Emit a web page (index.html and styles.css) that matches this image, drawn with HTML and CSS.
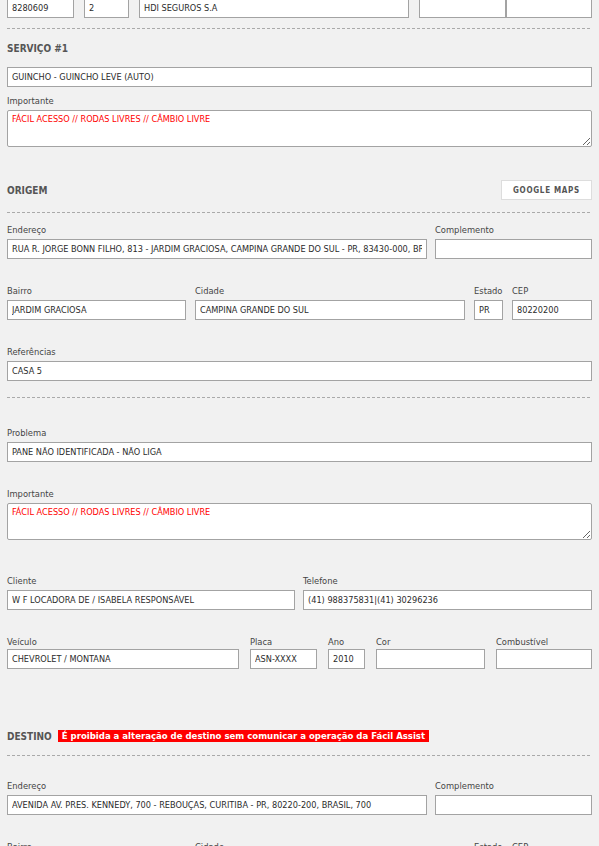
FILE: index.html
```html
<!DOCTYPE html>
<html lang="pt-BR">
<head>
  <meta charset="UTF-8" />
  <meta name="viewport" content="width=device-width, initial-scale=1.0"/>
  <title>Atendimento</title>
  <link rel="stylesheet" href="styles.css">
</head>
<body>
  <form class="sheet">

    <div class="row row-top">
      <input type="text" value="8280609">
      <input type="text" value="2">
      <input type="text" value="HDI SEGUROS S.A">
      <div class="pair">
        <input type="text" value="">
        <input type="text" value="">
      </div>
    </div>

    <div class="rule rule-top"></div>

    <!-- servico -->
    <h4 class="title title-servico">SERVIÇO #1</h4>
    <input type="text" class="full" value="GUINCHO - GUINCHO LEVE (AUTO)">
    <div class="field field-imp1">
      <label>Importante</label>
      <textarea rows="2">FÁCIL ACESSO // RODAS LIVRES // CÂMBIO LIVRE</textarea>
    </div>

    <!-- origem -->
    <div class="head head-origem">
      <h4 class="title">ORIGEM</h4>
      <button type="button" class="btn">GOOGLE MAPS</button>
    </div>
    <div class="rule rule-origem"></div>

    <div class="row cols-end row-end1">
      <div class="field"><label>Endereço</label><input type="text" value="RUA R. JORGE BONN FILHO, 813 - JARDIM GRACIOSA, CAMPINA GRANDE DO SUL - PR, 83430-000, BRASIL, 813"></div>
      <div class="field"><label>Complemento</label><input type="text" value=""></div>
    </div>

    <div class="row cols-bairro gap">
      <div class="field"><label>Bairro</label><input type="text" value="JARDIM GRACIOSA"></div>
      <div class="field"><label>Cidade</label><input type="text" value="CAMPINA GRANDE DO SUL"></div>
      <div class="field"><label>Estado</label><input type="text" value="PR"></div>
      <div class="field"><label>CEP</label><input type="text" value="80220200"></div>
    </div>

    <div class="field gap">
      <label>Referências</label>
      <input type="text" value="CASA 5">
    </div>

    <div class="rule rule-ref"></div>

    <div class="field field-prob">
      <label>Problema</label>
      <input type="text" value="PANE NÃO IDENTIFICADA - NÃO LIGA">
    </div>

    <div class="field gap">
      <label>Importante</label>
      <textarea rows="2">FÁCIL ACESSO // RODAS LIVRES // CÂMBIO LIVRE</textarea>
    </div>

    <div class="row cols-cliente row-cliente">
      <div class="field"><label>Cliente</label><input type="text" value="W F LOCADORA DE / ISABELA RESPONSÁVEL"></div>
      <div class="field"><label>Telefone</label><input type="text" value="(41) 988375831|(41) 30296236"></div>
    </div>

    <div class="row cols-veiculo row-veiculo">
      <div class="field"><label>Veículo</label><input type="text" value="CHEVROLET / MONTANA"></div>
      <div class="field"><label>Placa</label><input type="text" value="ASN-XXXX"></div>
      <div class="field"><label>Ano</label><input type="text" value="2010"></div>
      <div class="field"><label>Cor</label><input type="text" value=""></div>
      <div class="field"><label>Combustível</label><input type="text" value=""></div>
    </div>

    <!-- destino -->
    <div class="head head-destino">
      <h4 class="title">DESTINO</h4>
      <span class="alert">É proibida a alteração de destino sem comunicar a operação da Fácil Assist</span>
    </div>
    <div class="rule rule-destino"></div>

    <div class="row cols-end row-end2">
      <div class="field"><label>Endereço</label><input type="text" value="AVENIDA AV. PRES. KENNEDY, 700 - REBOUÇAS, CURITIBA - PR, 80220-200, BRASIL, 700"></div>
      <div class="field"><label>Complemento</label><input type="text" value=""></div>
    </div>

    <div class="row cols-bairro gap">
      <div class="field"><label>Bairro</label><input type="text" value="REBOUÇAS"></div>
      <div class="field"><label>Cidade</label><input type="text" value="CURITIBA"></div>
      <div class="field"><label>Estado</label><input type="text" value="PR"></div>
      <div class="field"><label>CEP</label><input type="text" value="80220200"></div>
    </div>

  </form>
</body>
</html>
```

FILE: styles.css
```css
* { box-sizing: border-box; }
body { margin: 0; background: #f1f1f1; font-family: "DejaVu Sans Condensed", "DejaVu Sans", sans-serif; font-size: 9.3px; color: #444; }
.sheet { padding: 0 7px 40px; }

input, textarea, button { font-family: inherit; font-size: 9.1px; }
input { display: block; width: 100%; height: 20px; padding: 0 4px; border: 1px solid #a3a3a3; background: #fff; color: #2b2b2b; outline: none; }
textarea { display: block; width: 100%; height: 37px; padding: 2px 4px; border: 1px solid #a3a3a3; border-radius: 2px; background: #fff; color: #f00; line-height: 12px; outline: none; }

.row { display: grid; }
.row-top { margin-top: -2px; grid-template-columns: 67px 45px 270px 1fr; column-gap: 10px; }
.pair { display: flex; }
.pair input { flex: 1; }

.rule { height: 1px; background: repeating-linear-gradient(to right, #aaa 0 3px, transparent 3px 5px); }
.rule-top { margin-top: 10px; }
.rule-origem { margin-top: 12px; }
.rule-ref { margin-top: 16px; }
.rule-destino { margin-top: 12px; }

.title { margin: 0; padding-top: 1px; font-size: 10px; font-weight: bold; line-height: 14px; color: #555; }
.title-servico { margin: 12px 0 11px; }

.head { display: flex; align-items: center; }
.head-origem { justify-content: space-between; height: 20px; margin-top: 33px; }
.head-destino { height: 14px; margin-top: 60px; }

.btn { height: 20px; width: 91px; padding: 0; border: 1px solid #ddd; background: #fff; color: #555; font-size: 8px; font-weight: bold; letter-spacing: 0.7px; cursor: pointer; }

.alert { margin-left: 6px; padding: 0 4px; height: 12px; line-height: 12px; background: #f00; color: #fff; font-size: 9.5px; font-weight: bold; }

.field { display: flex; flex-direction: column; }
.field label { padding-top: 1px; line-height: 14px; margin-bottom: 2px; }

.gap { margin-top: 24px; }
.field-imp1 { margin-top: 6px; }
.row-end1 { margin-top: 9px; }
.row-end2 { margin-top: 22px; }
.field-prob { margin-top: 27px; }
.row-cliente { margin-top: 33px; }
.row-veiculo { margin-top: 24px; }
.row-veiculo label { margin-bottom: 0; }

.cols-end { grid-template-columns: 420px 1fr; column-gap: 8px; }
.cols-bairro { grid-template-columns: 179px 270px 29px 1fr; column-gap: 9px; }
.cols-cliente { grid-template-columns: 288px 1fr; column-gap: 8px; }
.cols-veiculo { grid-template-columns: 232px 67px 37px 109px 1fr; column-gap: 11px; }
```
